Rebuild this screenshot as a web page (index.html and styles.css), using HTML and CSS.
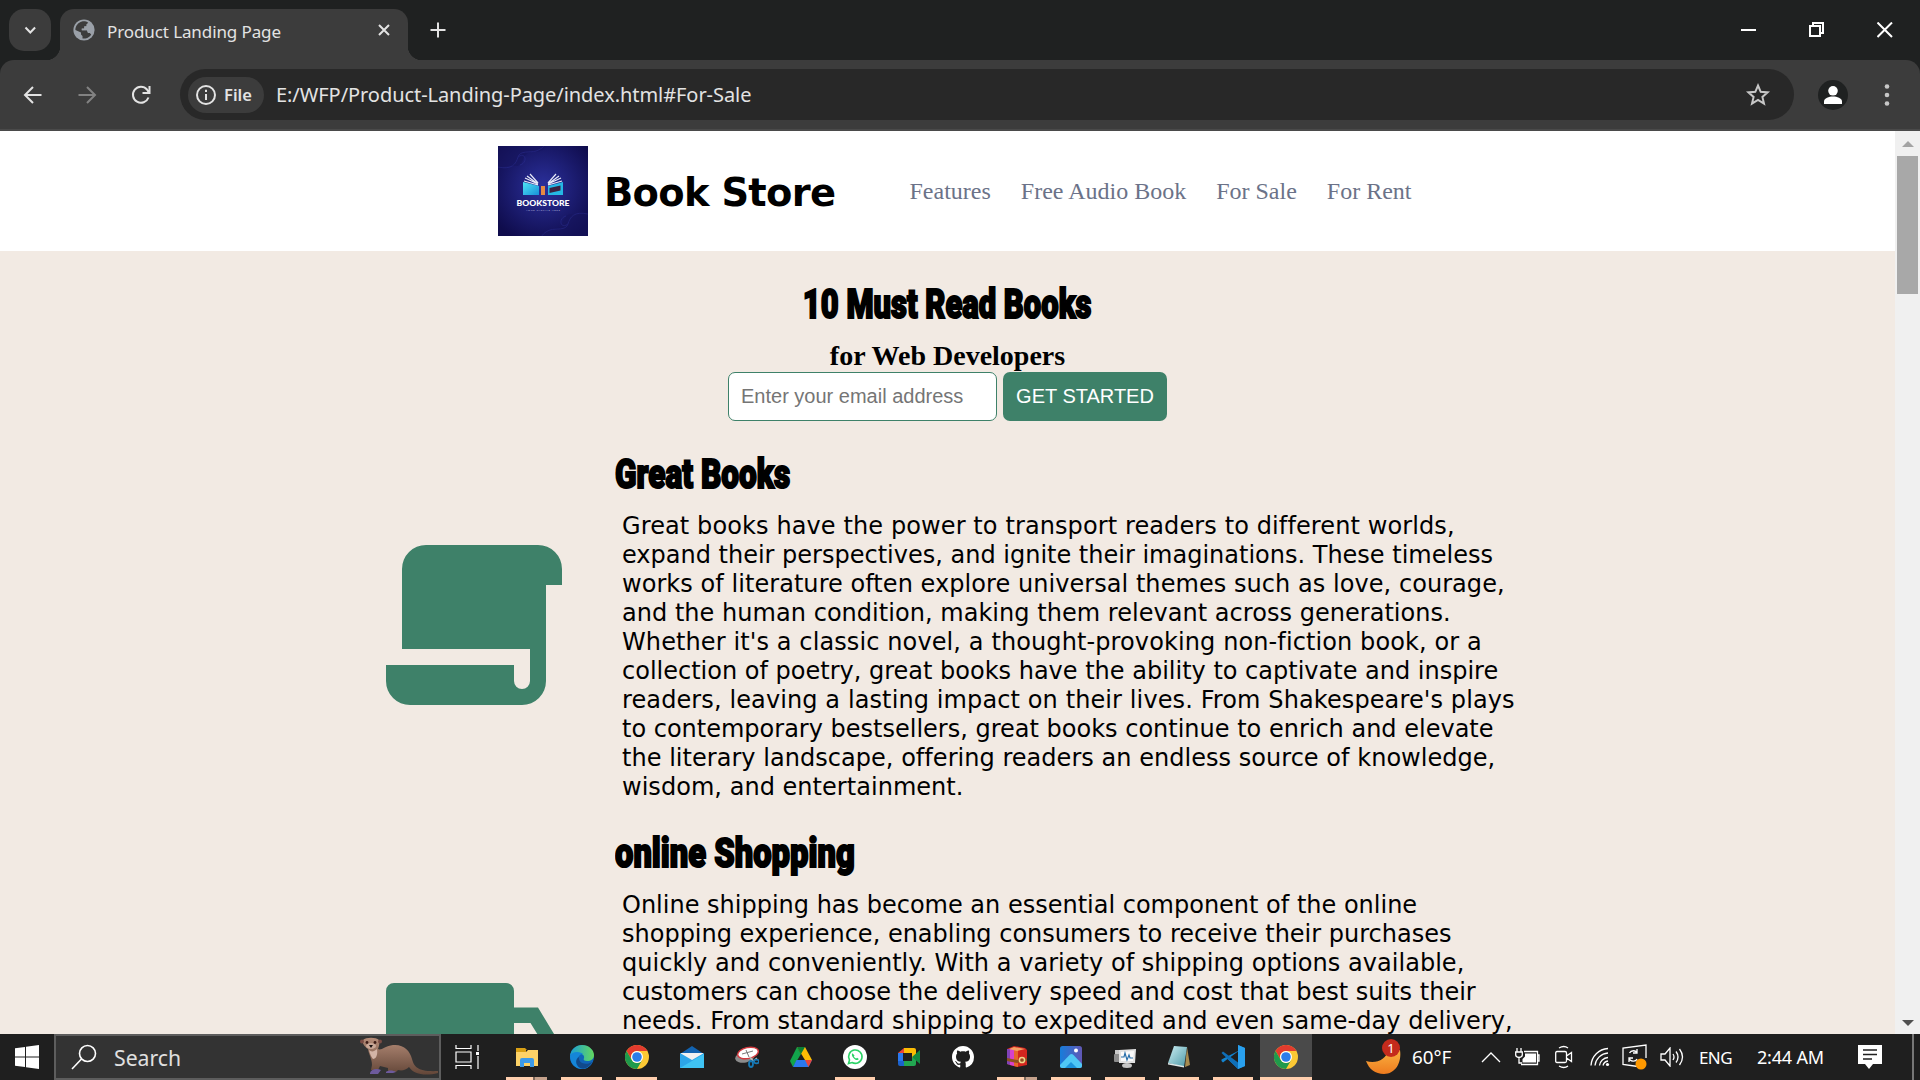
FILE: index.html
```html
<!DOCTYPE html>
<html lang="en">
<head>
<meta charset="utf-8">
<title>Product Landing Page</title>
<link rel="stylesheet" href="styles.css">
</head>
<body>
<div class="screen">
<header class="tabstrip">
  <div class="tab-search"><svg width="42" height="42" viewBox="0 0 42 42"><path d="M16.500 18.500l4.800 5 4.800-5" class="ln w2"/></svg></div>
  <div class="tab">
    <svg class="globe" width="22" height="22" viewBox="0 0 22 22"><circle cx="11" cy="11" r="10.600" fill="#9aa0a8"/><path d="M9 2.500C5 3.500 2.300 7 2.400 11l5.600 2.500v2l1.500 1.500v2.400c1 .2 2 .2 3 0 2.500-.6 4.500-2 5.700-4l-1.300-1.500h-2l-1-2.600H8.700V9.500h2.600V7.300h2.300V5.200l1.600-1.500C13.500 2.500 11 2 9 2.500z" fill="#3c3c3c"/><path d="M13.600 5.200v2.200h-2.300v2.400H8.900v1.500h5.300l1 2.600h2l1.600 1.300 1-4.200-2-6z" fill="#9aa0a8"/></svg>
    <span class="tab-title">Product Landing Page</span>
    <svg class="tab-x" width="14" height="14" viewBox="0 0 14 14"><path d="M2 2l10 10M12 2L2 12" class="ln w2"/></svg>
  </div>
  <svg class="plus" width="18" height="18" viewBox="0 0 18 18"><path d="M9 1.500v15M1.500 9h15" class="ln w2"/></svg>
  <div class="win">
    <svg width="16" height="16" viewBox="0 0 16 16"><path d="M0 8h15" class="wl"/></svg>
    <svg width="16" height="16" viewBox="0 0 16 16"><path d="M1 4h10v10H1zM4 4V1h10v10h-3" class="wl"/></svg>
    <svg width="16" height="16" viewBox="0 0 16 16"><path d="M.5.500l14.500 14.500M15 .500L.5 15" class="wl"/></svg>
  </div>
</header>
<div class="toolbar">
  <svg width="20" height="20" viewBox="0 0 20 20"><path d="M18.500 10H2.500M10 2L2 10l8 8" class="ln w2"/></svg>
  <svg class="dim" width="20" height="20" viewBox="0 0 20 20"><path d="M1.500 10h16M10 2l8 8-8 8" class="ln w2"/></svg>
  <svg width="20" height="20" viewBox="0 0 20 20"><path d="M17.500 12.500A8 8 0 1 1 16 4.500l1.500 2.500M18.500 1v7h-7" class="ln w2"/></svg>
  <div class="omnibox">
    <div class="chip"><svg width="22" height="22" viewBox="0 0 22 22"><circle cx="11" cy="11" r="9" class="ln w2"/><path d="M11 10v6M11 5.800v2.200" class="ln w2"/></svg><span>File</span></div>
    <span class="url">E:/WFP/Product-Landing-Page/index.html#For-Sale</span>
    <svg class="star" width="26" height="26" viewBox="0 0 26 26"><path d="M13 3.500l2.700 6.300 6.900.600-5.200 4.500 1.600 6.700-6-3.600-6 3.600 1.600-6.700-5.200-4.500 6.900-.600z" fill="none" stroke="#c7c7c7" stroke-width="2"/></svg>
  </div>
  <svg class="avatar" width="30" height="30" viewBox="0 0 30 30"><circle cx="15" cy="15" r="15" fill="#1f2121"/><circle cx="15" cy="10.800" r="4.800" fill="#fff"/><path d="M6 24v-2.500c0-3.500 5-5 9-5s9 1.500 9 5V24z" fill="#fff"/></svg>
  <svg class="dots" width="6" height="24" viewBox="0 0 6 24"><g fill="#c7c7c7"><circle cx="3" cy="3.500" r="2.300"/><circle cx="3" cy="12" r="2.300"/><circle cx="3" cy="20.500" r="2.300"/></g></svg>
</div>
<div class="view">
<main class="page">
  <nav class="site-head">
    <svg class="logo" width="90" height="90" viewBox="0 0 90 90">
      <defs><radialGradient id="lg" cx=".5" cy=".45" r=".65"><stop offset="0" stop-color="#2b309c"/><stop offset="1" stop-color="#0f0c4c"/></radialGradient>
      <linearGradient id="cy" x1="0" y1="0" x2="1" y2="1"><stop offset="0" stop-color="#4fe6f5"/><stop offset="1" stop-color="#178fd8"/></linearGradient></defs>
      <rect width="90" height="90" fill="url(#lg)"/>
      <g fill="#17165f" opacity=".55"><path d="M0 0h48c-4 8-12 4-18 7-6 2-4 13-12 13H0z"/><path d="M90 90H42c4-8 12-4 18-7 6-2 4-13 12-15h18z"/></g>
      <g fill="none" stroke="#3438a5" opacity=".35"><path d="M0 21c14 3 18-3 20-10s12-4 18-6 8-5 8-5M20 11c8-6 10 6 2 8"/><path d="M90 68c-14-3-18 3-20 10s-12 4-18 6-8 6-8 6M70 78c-8 6-10-6-2-8"/></g>
      <path d="M25 36l16 4v9H25z" fill="url(#cy)"/><path d="M65 36l-15 4v9h15z" fill="#25b7e4"/><path d="M51.500 42l11-2.500v5l-11 2.500z" fill="#3a2040"/><path d="M43 40h4v9h-4z" fill="#e48a43"/>
      <path d="M26 35l14 4M27 32l13 6M29 30l11 8M32 28l8 9M64 35l-14 4M63 32l-13 6M61 30l-11 8M58 28l-8 9" stroke="#e7eaf7" stroke-width="1.200" fill="none"/>
      <text x="18.500" y="60" class="lt" textLength="53" lengthAdjust="spacingAndGlyphs">BOOKSTORE</text>
      <text x="28" y="64.500" class="ls" textLength="34">YOUR TAGLINE HERE</text>
    </svg>
    <h1>Book Store</h1>
    <ul><li>Features</li><li>Free Audio Book</li><li>For Sale</li><li>For Rent</li></ul>
  </nav>
  <section class="hero">
    <h2 class="impact"><span class="i1">10 Must Read Books</span></h2>
    <h3>for Web Developers</h3>
    <form><div class="email">Enter your email address</div><div class="cta">GET STARTED</div></form>
  </section>
  <article class="feature first">
    <svg class="fi" width="176" height="160" viewBox="0 0 176 160"><path d="M16 104V24A24 24 0 0 1 40 0H152A24 24 0 0 1 176 24V40H160V136A24 24 0 0 1 136 160H24A24 24 0 0 1 0 136V120H128V136a8 8 0 0 0 16 0V104Z"/></svg>
    <div class="copy">
      <h2 class="impact"><span class="i2">Great Books</span></h2>
      <p><span class="wide">Great books have the power to transport readers to different worlds,</span><br><span class="snug">expand their perspectives, and ignite their imaginations. These timeless</span><br><span class="mid">works of literature often explore universal themes such as love, courage,</span><br>and the human condition, making them relevant across generations.<br><span class="wide">Whether it's a classic novel, a thought-provoking non-fiction book, or a</span><br><span class="snug">collection of poetry, great books have the ability to captivate and inspire</span><br><span class="wide">readers, leaving a lasting impact on their lives. From Shakespeare's plays</span><br><span class="snug">to contemporary bestsellers, great books continue to enrich and elevate</span><br>the literary landscape, offering readers an endless source of knowledge,<br>wisdom, and entertainment.</p>
    </div>
  </article>
  <article class="feature second">
    <svg class="fi truck" width="208" height="160" viewBox="0 0 208 160"><path d="M8 0H120a8 8 0 0 1 8 8V24.500H152L208 117V160H0V8A8 8 0 0 1 8 0ZM128 40V70H163L144.500 40Z"/></svg>
    <div class="copy">
      <h2 class="impact"><span class="i3">online Shopping</span></h2>
      <p><span class="snug">Online shipping has become an essential component of the online</span><br><span class="snug">shopping experience, enabling consumers to receive their purchases</span><br>quickly and conveniently. With a variety of shipping options available,<br><span class="snug">customers can choose the delivery speed and cost that best suits their</span><br><span class="mid">needs. From standard shipping to expedited and even same-day delivery,</span></p>
    </div>
  </article>
</main>
<div class="scroll"><i class="up"></i><i class="thumb"></i><i class="down"></i></div>
</div>
<footer class="taskbar">
  <div class="start"><svg width="24" height="24" viewBox="0 0 24 24" fill="#fff"><path d="M0 3.300L10 2v9.500H0zM11 1.800L24 0v11.500H11zM0 12.500h10V22L0 20.700zM11 12.500h13V24l-13-1.800z"/></svg></div>
  <div class="search">
    <svg width="26" height="26" viewBox="0 0 26 26"><circle cx="16.500" cy="9.500" r="8" class="wl thin"/><path d="M10.500 15L1 25" class="wl thin"/></svg>
    <span class="label">Search</span>
    <svg class="otter" width="80" height="40" viewBox="0 0 80 40"><defs><linearGradient id="ot" x1="0" y1="0" x2="0" y2="1"><stop offset="0" stop-color="#b58c78"/><stop offset="1" stop-color="#634638"/></linearGradient></defs><path d="M4 3c3-3 13-3 16 0 1 3 0 6-1 9 3 2 7-3 15-4 11-1 17 6 19 14 2 8 6 13 26 12v2c-12 3-24 2-29-6-3 3-7 4-11 3l-2 2h-8v-4l-8-2-2 4h-7l1-5c0-6-3-10-4-16C5 9 3 6 4 3z" fill="url(#ot)"/><path d="M10 13c2 2 5 2 8-1 1 6-1 10-4 10-2-2-3-5-4-9z" fill="#d3b4a6"/><ellipse cx="12" cy="9" rx="5" ry="3" fill="#c9a797"/><circle cx="8" cy="5.500" r="1.400" fill="#3c1c18"/><circle cx="16" cy="5.500" r="1.400" fill="#3c1c18"/><path d="M10 8h4l-2 3z" fill="#191010"/><circle cx="3" cy="4.500" r="2" fill="#7b4d45"/><circle cx="21" cy="4.500" r="2" fill="#7b4d45"/><path d="M11 36c1-4 7-5 11-3l-3 4h-8zM27 35c2-2 7-2 10 0l-3 1h-7z" fill="#6d5a9d"/></svg>
  </div>
  <div class="task tv"><svg width="26" height="24" viewBox="0 0 26 24"><path d="M1 0v3.500h15V0M1 7h15v10H1zM1 24v-3.500h15V24M23 0v6M23 11v13" fill="none" stroke="#fff" stroke-width="1.200"/><path d="M21 7h3v3h-3z" fill="#fff"/></svg></div>
  <div class="apps">
    <div class="task big run two"><svg width="24" height="24" viewBox="0 0 24 24"><path d="M1 3h9l2 2h-1v5H1z" fill="#d9a015"/><path d="M1 7h10l2-2h10v16H1z" fill="#fdd267"/><path d="M5 22V15q0-2 2-2h10q2 0 2 2v7h-4v-4H9v4z" fill="#3c9ae8"/></svg></div>
    <div class="task big run"><svg width="24" height="24" viewBox="0 0 24 24"><defs><linearGradient id="eg"><stop offset="0" stop-color="#1b9ed5"/><stop offset="1" stop-color="#63d85e"/></linearGradient></defs><circle cx="12" cy="12" r="12" fill="#0f65b8"/><path d="M0 11C1 4 6 0 12 0c7 0 12 5 12 10 0 4-3 6-7 6-3 0-4-1-3-3 1-3-3-5-7-5-3 0-6 1-7 3z" fill="url(#eg)"/><path d="M0 11c1-3 4-4 7-4 3 0 5 1 6 2-4 0-6 4-4 8s7 5 12 2c-2 3-5 5-9 5C5 24 0 18 0 11z" fill="#1586d8"/><path d="M9 12c-1 6 6 9 13 5-3 6-8 8-12 6-5-3-5-9-1-11z" fill="#114a8b"/><path d="M24 15v9h-7q5-3 6-7z" fill="#1f1f1f"/></svg></div>
    <div class="task big run"><svg width="24" height="24" viewBox="0 0 24 24"><use href="#chrome"/></svg></div>
    <div class="task big"><svg width="24" height="24" viewBox="0 0 24 24"><path d="M0 9l12-8 12 8v4H0z" fill="#1263b0"/><path d="M1 8h22v6l-11 4L1 14z" fill="#f1f1f1"/><path d="M0 8l12 7 12-7v15H0z" fill="#2ca5e8"/><path d="M0 23l24-14v14z" fill="#3fc3f3"/></svg></div>
    <div class="task big"><svg width="24" height="24" viewBox="0 0 24 24"><ellipse cx="10" cy="12" rx="10" ry="5.500" transform="rotate(-12 10 12)" fill="#8c8c8c"/><ellipse cx="13" cy="8" rx="10.500" ry="5.500" transform="rotate(-12 13 8)" fill="#fff" stroke="#d23a3f" stroke-width="1.500"/><path d="M7 9l11-3M11 5l3 7" stroke="#777"/><path d="M15 12l3 4 4-3" stroke="#bbb" stroke-width="1.500" fill="none"/><ellipse cx="16" cy="19" rx="2" ry="3" fill="none" stroke="#1679b6" stroke-width="1.800"/><ellipse cx="21.500" cy="16.500" rx="2.500" ry="1.800" fill="none" stroke="#1679b6" stroke-width="1.800"/></svg></div>
    <div class="task"><svg width="24" height="24" viewBox="0 0 24 24"><path d="M8 2l4 7-8 13-3-6z" fill="#12a44b"/><path d="M8 2h8l7 13h-7z" fill="#fcbc04"/><path d="M8 2h8l-4 7z" fill="#0b7e34"/><path d="M7.500 15H23l-3.500 7H4z" fill="#2a78ee"/><path d="M16 15h7l-3.500 7z" fill="#e9453a"/></svg></div>
    <div class="task run"><svg width="24" height="24" viewBox="0 0 24 24"><circle cx="12" cy="12" r="12" fill="#fff"/><path d="M5.500 18.500l1-3.500a6.700 6.700 0 1 1 2.500 2.500z" fill="none" stroke="#2bd366" stroke-width="1.600"/><path d="M9.500 8.300c-1.500 1.500 0 4 2 5.600 2 1.500 3.500 1.600 4.300.1l-1.700-1.200-1 .8c-1-.4-1.700-1-2.200-2l.6-1z" fill="#2bd366"/></svg></div>
    <div class="task"><svg width="24" height="24" viewBox="0 0 24 24"><path d="M7 3v5H1z" fill="#e9453a"/><path d="M1 8h5v8H1z" fill="#2a78ee"/><path d="M1 16h6v5H3q-2 0-2-2z" fill="#1b62cd"/><path d="M7 3h10q2 0 2 2v6l-4 2V8H7z" fill="#fcbc04"/><path d="M7 16h8v-3l4-2v8q0 2-2 2H7z" fill="#22a751"/><path d="M15 12l8-7v14z" fill="#128a40"/></svg></div>
    <div class="task"><svg width="22" height="22" viewBox="0 0 16 16"><path fill="#fff" d="M8 0C3.580 0 0 3.580 0 8c0 3.540 2.290 6.530 5.470 7.590.4.070.55-.17.55-.38 0-.19-.01-.82-.01-1.490-2.010.37-2.530-.49-2.690-.94-.09-.23-.48-.94-.82-1.130-.28-.15-.68-.52-.01-.53.63-.01 1.080.58 1.230.82.720 1.210 1.870.87 2.330.66.070-.52.280-.87.510-1.070-1.780-.2-3.640-.89-3.640-3.950 0-.87.310-1.590.82-2.150-.08-.2-.36-1.020.08-2.120 0 0 .67-.21 2.200.82.640-.18 1.320-.27 2-.27s1.360.09 2 .27c1.530-1.040 2.200-.82 2.200-.82.440 1.100.160 1.920.080 2.120.51.560.82 1.270.82 2.150 0 3.070-1.870 3.750-3.650 3.950.29.25.54.73.54 1.480 0 1.070-.01 1.930-.01 2.200 0 .21.150.46.550.38A8.010 8.010 0 0 0 16 8c0-4.420-3.580-8-8-8z"/></svg></div>
    <div class="task run two"><svg width="24" height="24" viewBox="0 0 24 24"><path d="M2 4l7-3 11 2 2 2v15l-10 2L2 19z" fill="#d3251e"/><path d="M2 4h3v16l-3-1z" fill="#8142b8"/><path d="M5 4h4v17l-4-1z" fill="#d641cc"/><path d="M9 4h4v18l-4-1z" fill="#e7652b"/><path d="M9 2l11 2-8 2-8-2z" fill="#f4a064"/><path d="M2 13l10 2 10-2v3l-10 2-10-2z" fill="#8e501f"/><circle cx="17" cy="15" r="2.600" fill="none" stroke="#edd68a" stroke-width="1.500"/></svg></div>
    <div class="task run"><svg width="22" height="22" viewBox="0 0 22 22"><defs><linearGradient id="ph"><stop offset="0" stop-color="#167ddb"/><stop offset="1" stop-color="#6157b5"/></linearGradient></defs><rect width="22" height="22" rx="2.500" fill="url(#ph)"/><path d="M0 19L9.500 9q2-2 4 0L22 18v2q0 2-2 2H2q-2 0-2-2z" fill="#4fc8f5"/><path d="M5 22l6-6 6 6z" fill="#1c94db"/><circle cx="16" cy="4.500" r="2" fill="#fff"/></svg></div>
    <div class="task run"><svg width="24" height="24" viewBox="0 0 24 24"><rect x="2" y="5" width="14" height="12" fill="#c9c9c9"/><rect x="1" y="9" width="7" height="8" rx="1" fill="#8c8c8c"/><path d="M6 5l17-1-1 14H6z" fill="#e2e2e2"/><path d="M8 7l13-1-1 10H8z" fill="#fafafa"/><path d="M8 12h3l1-4 2 7 2-5 1 3h3" fill="none" stroke="#276eaa" stroke-width="1.200"/><ellipse cx="14" cy="20.500" rx="5" ry="2.500" fill="#c6c6c6"/></svg></div>
    <div class="task run"><svg width="24" height="24" viewBox="0 0 24 24"><defs><linearGradient id="np" x1="0" y1="0" x2="1" y2="1"><stop offset="0" stop-color="#cceff3"/><stop offset="1" stop-color="#4c98a6"/></linearGradient></defs><path d="M20 2l3 18-5 2z" fill="#a78b4f"/><path d="M7 1l13 1-3 20L1 18z" fill="url(#np)"/><path d="M1 18l16 3v1.500L1 19.500z" fill="#e1e9e9"/></svg></div>
    <div class="task run"><svg width="24" height="24" viewBox="0 0 24 24"><path d="M17 0l7 3v18l-7 3L6.500 14 2 17.500.500 16v-1.500L17 6z" fill="#1484cf"/><path d="M.500 8L2 6.500 17 17.500V24z" fill="#0f6fb8"/><path d="M17 6.500L9.500 12l7.500 5.500z" fill="#1f1f1f"/><path d="M17 0l7 3v18l-7 3z" fill="#29a0ee"/></svg></div>
    <div class="task run active"><svg width="24" height="24" viewBox="0 0 24 24"><g id="chrome"><circle cx="12" cy="12" r="12" fill="#fcc934"/><path d="M1.600 6A12 12 0 0 1 22.400 6H12a6 6 0 0 0-5.200 9z" fill="#e33b2e"/><path d="M1.600 6A12 12 0 0 0 12 24l5.200-9a6 6 0 0 1-10.400 0z" fill="#1f9a4c"/><circle cx="12" cy="12" r="6" fill="#fff"/><circle cx="12" cy="12" r="4.800" fill="#2b7de9"/></g></svg></div>
  </div>
  <div class="tray">
    <svg class="moon" width="36" height="40" viewBox="0 0 36 40"><defs><linearGradient id="mo" x1="0" y1="0" x2="0" y2="1"><stop offset="0" stop-color="#fbb443"/><stop offset="1" stop-color="#ee7b1e"/></linearGradient></defs><path d="M0 24c10 3 20-1 23-12l11 1c2 13-5 24-16 24C9 37 3 32 0 24z" fill="url(#mo)"/><circle cx="25" cy="11" r="9" fill="#c42b1c"/><text x="25" y="16" class="badge">1</text></svg>
    <span class="temp">60°F</span>
    <svg class="t1" width="20" height="12" viewBox="0 0 20 12"><path d="M1 11L10 2l9 9" class="tl"/></svg>
    <svg class="t2" width="26" height="20" viewBox="0 0 26 20"><path d="M2 1v4M6 1v4M.7 5h6.600v3q0 2-3.300 2.500Q.7 10 .7 8zM4 10v6h3" class="tl"/><path d="M10 6.500h11v9H7.500V12L10 9.500z" fill="#fff"/><path d="M6 17.500h16.500v-13H9M22.500 8H24v6h-1.500" class="tl"/></svg>
    <svg class="t3" width="18" height="24" viewBox="0 0 18 24"><path d="M4 3q5-3 9 0M4 21q5 3 9 0M2 6.500h8q1.500 0 1.500 1.500v8q0 1.500-1.500 1.500H2Q.7 17.500.7 16V8Q.7 6.500 2 6.500zM11.500 11L16.500 7.500v9L11.500 13" class="tl"/></svg>
    <svg class="t4" width="20" height="20" viewBox="0 0 20 20"><path d="M1 18.500A18 18 0 0 1 18 1.500M5 18.500A14 14 0 0 1 18 6M9.500 18.500A9 9 0 0 1 18 10.500M13 18.500A6 6 0 0 1 18 14" class="tl"/><circle cx="17.500" cy="17.500" r="1.600" fill="#fff"/></svg>
    <svg class="t5" width="26" height="26" viewBox="0 0 26 26"><path d="M16 22.500L1 20.500V4L24 1v13M7 14c1 4 7 4 8 1M15 9C14 6 9 6 7.500 9M15 5v4h-4M7 18v-4h4" class="tl"/><circle cx="19" cy="20" r="5.500" fill="#ff9900"/></svg>
    <svg class="t6" width="24" height="20" viewBox="0 0 24 20"><path d="M1 7h4l5-6v18l-5-6H1zM13 7q2 3 0 6M16 4.500q4 5.500 0 11M19.500 2q6 8 0 16" class="tl"/></svg>
    <span class="lang">ENG</span>
    <span class="clock">2:44 AM</span>
    <svg class="note" width="24" height="24" viewBox="0 0 24 24"><path d="M0 0h24v19H15l-4 5-4-5H0z" fill="#fff"/><path d="M5 5h14M5 9.500h14M5 14h9" stroke="#1f1f1f" stroke-width="1.300"/></svg>
    <i class="edge"></i>
  </div>
</footer>
</div>
</body>
</html>
```
FILE: styles.css
```css
*{box-sizing:border-box}
body{margin:0;background:#1f2121;overflow:hidden}
svg{display:block;flex:none}
.screen{width:1920px;height:1080px;display:flex;flex-direction:column;overflow:hidden;background:#1f2121;font-family:"Noto Sans","Open Sans",sans-serif}
.ln{fill:none;stroke:#e3e3e3}
.w2{stroke-width:2}
.wl{fill:none;stroke:#fff;stroke-width:2}
.thin{stroke-width:1.6}
.tl{fill:none;stroke:#fff;stroke-width:1.3}

.tabstrip{height:60px;flex:none;display:flex;padding:9px 0 0 9px}
.tab-search{width:42px;height:42px;border-radius:15px;background:#3c3c3c}
.tab{position:relative;width:348px;height:51px;margin-left:9px;border-radius:14px 14px 0 0;background:#3c3c3c;display:flex;align-items:center;padding:0 17px 9px 13px}
.tab::before,.tab::after{content:"";position:absolute;bottom:0;width:14px;height:14px}
.tab::before{left:-14px;background:radial-gradient(circle at 0 0,transparent 14px,#3c3c3c 14.5px)}
.tab::after{right:-14px;background:radial-gradient(circle at 100% 0,transparent 14px,#3c3c3c 14.5px)}
.tab-title{margin-left:12px;flex:1;font-size:17px;line-height:24px;letter-spacing:-.1px;color:#e3e3e3;padding-top:4px;white-space:nowrap}
.plus{margin:12px 0 0 21px}
.win{margin-left:auto;display:flex;gap:52px;padding:13px 27px 0 0}
.toolbar{height:71px;flex:none;background:#3c3c3c;border-bottom:2px solid #4a4a4a;border-radius:14px 14px 0 0;display:flex;align-items:center;padding:0 30px 0 23px}
.toolbar>svg+svg{margin-left:34px}
.toolbar .dim{opacity:.42}
.omnibox{margin-left:29px;width:1614px;height:51px;border-radius:26px;background:#282828;display:flex;align-items:center;padding:0 23px 0 8px}
.chip{height:36px;width:76px;border-radius:18px;background:#3c3c3c;display:flex;align-items:center;padding-left:7px;gap:7px;font-size:16.500px;font-weight:600;color:#e3e3e3}
.url{flex:1;margin-left:12px;font-size:20px;letter-spacing:-.06px;line-height:30px;color:#e3e3e3}
.avatar{margin-left:24px}
.toolbar>.dots{margin-left:36px}

.view{height:903px;flex:none;display:flex;overflow:hidden}
.page{width:1895px;height:903px;background:#f2eae3;overflow:hidden;color:#000}
.scroll{width:25px;background:#f0f0f0;display:flex;flex-direction:column;align-items:center}
.up,.down{border:6px solid transparent;border-top:0;border-bottom:6px solid #a3a3a3;margin-top:10px}
.thumb{width:21px;height:138px;margin-top:9px;background:#a8a8a8}
.down{border-top:6px solid #505050;border-bottom:0;margin:auto 0 8px}
.site-head{height:120px;background:#fff;display:flex;align-items:center;padding-left:498px}
.lt{font:900 8px "Lato",sans-serif;fill:#fff}
.ls{font:2.6px "Lato",sans-serif;fill:#b6b8df}
h1{margin:0 0 0 16px;padding-top:3px;width:305.500px;font:bold 38.4px/48px "DejaVu Sans",sans-serif;letter-spacing:-.7px}
ul{margin:0;padding:0;list-style:none;display:flex;gap:30px;font:24px/28px "Liberation Serif",serif;color:#6b7288}
.hero{display:flex;flex-direction:column;align-items:center}
.impact{margin:0;font:900 41px/50px Roboto,sans-serif;-webkit-text-stroke:2px #000;white-space:nowrap}
.impact span{display:inline-block;transform-origin:left}
.impact .i1{transform:scaleX(.755);transform-origin:center}
.impact .i2{transform:scaleX(.77)}
.impact .i3{transform:scaleX(.798)}
.hero .impact{margin-top:28px;height:61px}
h3{margin:0;font:bold 28px/32px "Liberation Serif",serif}
form{display:flex;gap:6px;font:20px/47px "Liberation Sans",sans-serif}
.email{width:269px;height:49px;border:1px solid #3e8169;border-radius:7px;background:#fff;color:#757575;padding-left:12px}
.cta{width:164px;height:49px;border-radius:7px;background:#3e8169;color:#fff;text-align:center;line-height:49px}
.feature{display:flex;padding-left:385.5px}
.fi{fill:#3e8169}
.first{margin-top:28px;height:379px}
.first .fi{margin-top:96px}
.second .fi{margin-top:155px}
.copy{width:920px;margin-left:53.500px}
.second .copy{margin-left:21.500px}
.copy .impact{height:61px}
p{margin:0 0 0 7px;padding-top:2px;font:24px/29px "DejaVu Sans",sans-serif;letter-spacing:.036px;font-variant-ligatures:none;white-space:nowrap}
.wide{letter-spacing:.108px}
.mid{letter-spacing:.056px}
.snug{letter-spacing:0}

.taskbar{height:46px;flex:none;background:#1f1f1f;display:flex;color:#fff}
.start{width:54px;padding:11px 0 0 15px}
.search{width:387px;height:46px;border:2px solid #5d5d5d;background:#333;display:flex;align-items:center;padding-left:15px;font-size:21.200px;color:#e0e0e0}
.label{margin-left:17px;padding-top:1px}
.otter{margin-left:auto}
.task{position:relative;width:54px;height:46px;display:flex;justify-content:center;align-items:center}
.tv{width:53px}
.big{width:55px}
.apps{display:flex;padding-left:5px}
.run::after{content:"";position:absolute;left:7px;right:7px;bottom:0;height:3px;background:#ffcfae}
.two::after{background:linear-gradient(90deg,#ffcfae 27px,#7d695d 27px,#7d695d 29px,#c5a28c 29px)}
.active{width:52px;background:#4a4a4a}
.active::after{left:0;right:0}
.tray{display:flex;align-items:center;flex:1;white-space:nowrap}
.badge{font:13px "Noto Sans",sans-serif;fill:#fff;text-anchor:middle}
.moon{margin-left:54px}
.temp{margin-left:10px;width:40px;font-size:18.800px}
.t1{margin-left:29px}
.t2,.t3{margin-left:14px}
.t4{margin-left:17px}
.t5,.t6{margin-left:12px}
.lang{margin-left:15px;width:33px;font-size:17px;letter-spacing:-.6px}
.clock{margin-left:25px;width:67px;font-size:18px;letter-spacing:-.2px}
.note{margin-left:34px}
.edge{width:2px;height:46px;margin:0 6px 0 auto;background:#777}
```
